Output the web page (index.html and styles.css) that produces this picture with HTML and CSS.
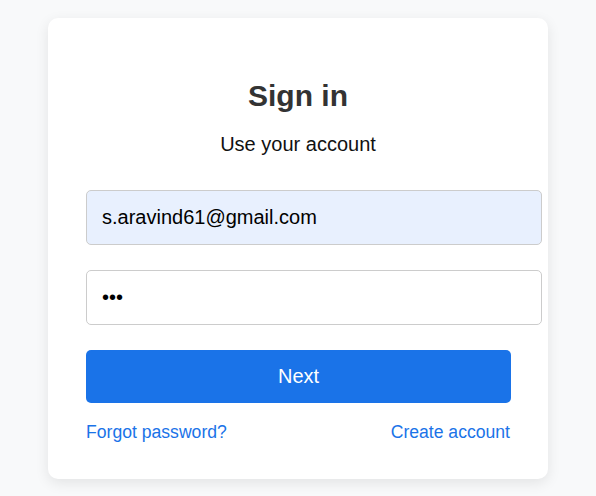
FILE: index.html
```html
<!DOCTYPE html>
<html lang="en">
<head>
<meta charset="utf-8">
<title>Sign in</title>
<link rel="stylesheet" href="styles.css">
</head>
<body>
  <main class="card">
    <h1 class="title">Sign in</h1>
    <p class="subtitle">Use your account</p>
    <form class="form">
      <input class="field field-filled" type="email" value="s.aravind61@gmail.com">
      <input class="field" type="password" value="abc">
      <button class="next" type="button">Next</button>
    </form>
    <div class="links">
      <a href="#" class="link">Forgot password?</a>
      <a href="#" class="link">Create account</a>
    </div>
  </main>
</body>
</html>
```

FILE: styles.css
```css
html, body {
  margin: 0;
  padding: 0;
}
body {
  min-height: 100vh;
  box-sizing: border-box;
  padding-top: 1px;
  background: #f8f9fa;
  display: flex;
  align-items: center;
  justify-content: center;
  font-family: "Liberation Sans", Arial, sans-serif;
}
.card {
  width: 424px;
  background: #fff;
  border-radius: 10px;
  padding: 40px 38px 37px;
  box-shadow: 0 4px 14px rgba(0, 0, 0, 0.09);
}
.title {
  margin: 21px 0 20px;
  font-size: 30px;
  font-weight: bold;
  color: #333;
  text-align: center;
  line-height: normal;
}
.subtitle {
  margin: 0 0 34px;
  font-size: 20px;
  color: #111;
  text-align: center;
}
.form {
  display: flex;
  flex-direction: column;
  align-items: flex-start;
}
.field {
  width: 424px;
  box-sizing: content-box;
  padding: 15px;
  margin: 0 0 25px;
  font-family: "Liberation Sans", Arial, sans-serif;
  font-size: 20px;
  line-height: 23px;
  height: 23px;
  color: #000;
  border: 1px solid #ccc;
  border-radius: 5px;
  background: #fff;
  outline: none;
}
.field-filled {
  background: #e8f0fe;
}
.next {
  width: 425px;
  height: 53px;
  margin: 0;
  border: none;
  border-radius: 5px;
  background: #1a73e8;
  color: #fff;
  font-family: "Liberation Sans", Arial, sans-serif;
  font-size: 20px;
  cursor: pointer;
}
.links {
  margin-top: 19px;
  display: flex;
  justify-content: space-between;
  line-height: 20px;
}
.link {
  color: #1a73e8;
  text-decoration: none;
  font-size: 17.6px;
}
```
